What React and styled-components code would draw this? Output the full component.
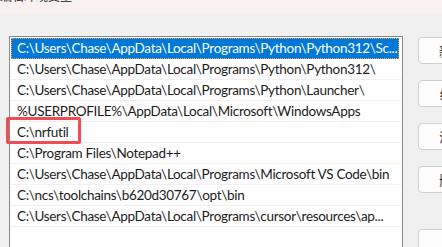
import React from 'react'
import styled, { createGlobalStyle } from 'styled-components'

const GlobalStyle = createGlobalStyle`
  html, body {
    margin: 0;
    padding: 0;
    background: #f0f0f0;
  }
  body {
    width: 442px;
    height: 247px;
    overflow: hidden;
    font-family: Lato, 'Noto Sans CJK SC', sans-serif;
  }
`

const Window = styled.div`
  width: 442px;
  height: 247px;
  overflow: hidden;
  background: #f0f0f0;
`

const TitleBar = styled.div`
  height: 14px;
  overflow: hidden;
  background: #f8f1f0;
`

const Title = styled.div`
  margin-top: -13px;
  font-family: 'Noto Sans CJK SC', sans-serif;
  font-size: 12px;
  line-height: 18px;
  color: #1a1a1a;
  white-space: nowrap;
`

const Body = styled.div`
  display: flex;
  align-items: flex-start;
  gap: 15px;
  padding: 22px 0 0 9px;
`

const List = styled.div`
  flex: none;
  width: 390px;
  height: 240px;
  border: 1px solid #868a91;
  border-bottom: none;
  background: #ffffff;
  padding: 1px 1px 0 1px;
  box-sizing: content-box;
`

const Row = styled.div`
  position: relative;
  height: 21px;
  box-sizing: border-box;
  border-bottom: 1px solid ${p => (p.$selected ? 'transparent' : '#f0f0f0')};
  background: ${p => (p.$selected ? '#0078d7' : 'transparent')};
  outline: ${p => (p.$selected ? '1px dotted #f0a040' : 'none')};
  outline-offset: -1px;
  width: ${p => (p.$selected ? '388px' : 'auto')};
`

const Label = styled.span`
  display: block;
  padding-left: 6px;
  font-size: 13.5px;
  letter-spacing: -0.3px;
  line-height: 20px;
  white-space: nowrap;
  overflow: hidden;
  color: ${p => (p.$selected ? '#ffffff' : '#1b1b1b')};
`

const Highlight = styled.div`
  position: absolute;
  left: -5px;
  top: -5px;
  width: 75px;
  height: 27px;
  box-sizing: border-box;
  border: 3px solid #ee4d56;
  border-radius: 2px;
  pointer-events: none;
`

const Buttons = styled.div`
  display: flex;
  flex-direction: column;
  gap: 16px;
  padding-top: 1px;
`

const Button = styled.button`
  width: 86px;
  height: 27px;
  margin-top: ${p => (p.$spaced ? '20px' : '0')};
  border: 1px solid #d0d0d0;
  border-radius: 4px;
  background: #fdfdfd;
  font-family: 'Noto Sans CJK SC', sans-serif;
  font-size: 13px;
  color: #1a1a1a;
  padding: 0;
  text-align: center;
  white-space: nowrap;
`

const paths = [
  'C:\\Users\\Chase\\AppData\\Local\\Programs\\Python\\Python312\\Sc...',
  'C:\\Users\\Chase\\AppData\\Local\\Programs\\Python\\Python312\\',
  'C:\\Users\\Chase\\AppData\\Local\\Programs\\Python\\Launcher\\',
  '%USERPROFILE%\\AppData\\Local\\Microsoft\\WindowsApps',
  'C:\\nrfutil',
  'C:\\Program Files\\Notepad++',
  'C:\\Users\\Chase\\AppData\\Local\\Programs\\Microsoft VS Code\\bin',
  'C:\\ncs\\toolchains\\b620d30767\\opt\\bin',
  'C:\\Users\\Chase\\AppData\\Local\\Programs\\cursor\\resources\\ap...',
  '',
]

const buttons = ['新建(N)', '编辑(E)', '浏览(B)', '删除(D)', '上移(U)']

export default function App() {
  return (
    <Window>
      <GlobalStyle />
      <TitleBar>
        <Title>编辑环境变量</Title>
      </TitleBar>
      <Body>
        <List>
          {paths.map((p, i) => (
            <Row key={i} $selected={i === 0}>
              <Label $selected={i === 0}>{p}</Label>
              {i === 4 && <Highlight />}
            </Row>
          ))}
        </List>
        <Buttons>
          {buttons.map((b, i) => (
            <Button key={b} $spaced={i === 4}>{b}</Button>
          ))}
        </Buttons>
      </Body>
    </Window>
  )
}
